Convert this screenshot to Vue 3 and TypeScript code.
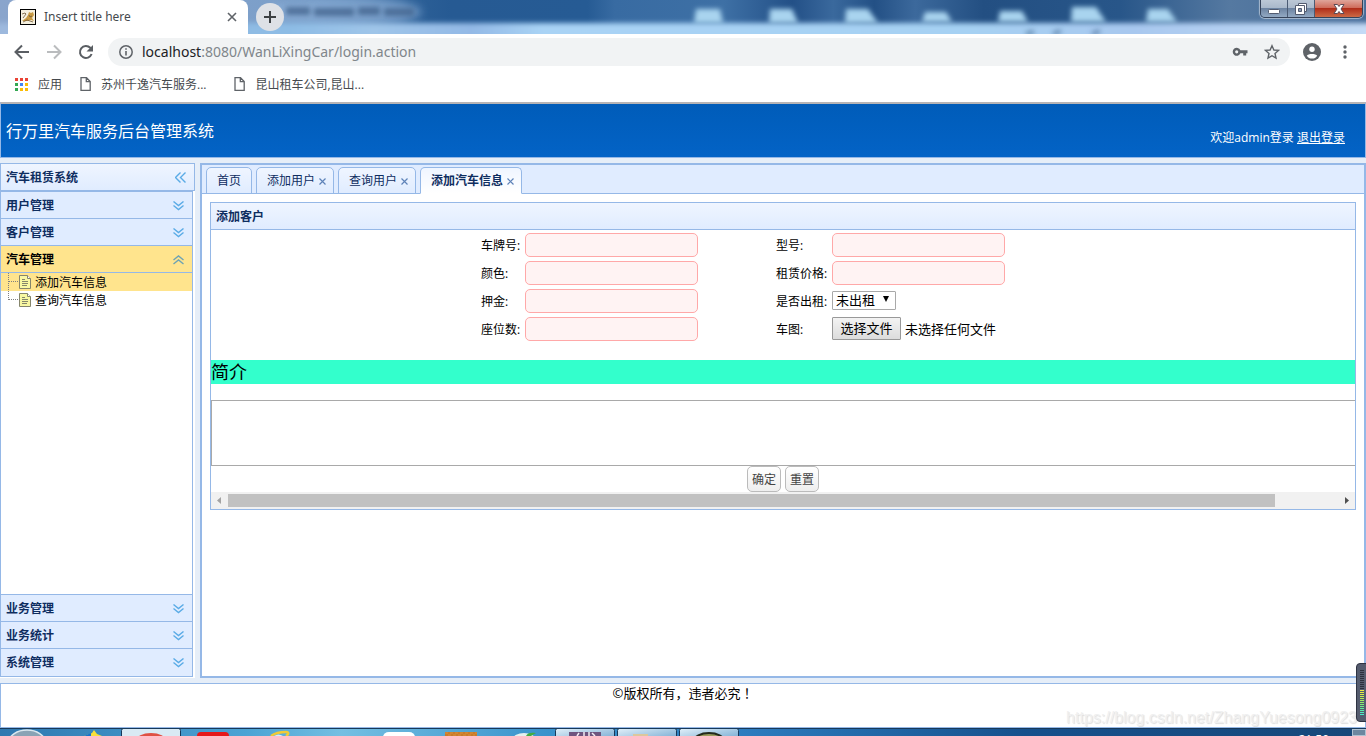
<script setup lang="ts">
import { ref } from 'vue'

interface Tab { title: string; closable: boolean }
interface Field { id: string; label: string; kind: 'text' | 'select' | 'file' }

const topMenus: string[] = ['用户管理', '客户管理']
const bottomMenus: string[] = ['业务管理', '业务统计', '系统管理']
const treeItems: string[] = ['添加汽车信息', '查询汽车信息']
const tabs: Tab[] = [
  { title: '首页', closable: false },
  { title: '添加用户', closable: true },
  { title: '查询用户', closable: true },
  { title: '添加汽车信息', closable: true },
]
const activeTab = ref(3)
const activeItem = ref(0)
const rows: Field[][] = [
  [{ id: 'plate', label: '车牌号:', kind: 'text' }, { id: 'model', label: '型号:', kind: 'text' }],
  [{ id: 'color', label: '颜色:', kind: 'text' }, { id: 'price', label: '租赁价格:', kind: 'text' }],
  [{ id: 'deposit', label: '押金:', kind: 'text' }, { id: 'rented', label: '是否出租:', kind: 'select' }],
  [{ id: 'seats', label: '座位数:', kind: 'text' }, { id: 'photo', label: '车图:', kind: 'file' }],
]
const appColors: string[] = ['#ea4335', '#ea4335', '#ea4335', '#34a853', '#4285f4', '#fbbc05', '#34a853', '#fbbc05', '#fbbc05']
const levels: string[] = ['#f2ee3e', '#e6ee42', '#d8ee48', '#c8ee4e', '#b6ee56', '#a4ee60', '#92ee6a', '#80ee78', '#70ee88', '#62ee98', '#58eeaa', '#50eebc', '#4aeccc']
</script>

<template>
  <div class="window">
    <header class="titlebar">
      <svg class="glass" viewBox="0 0 1366 34" preserveAspectRatio="none" aria-hidden="true">
        <defs>
          <filter id="soft" filterUnits="userSpaceOnUse" x="-40" y="-40" width="1446" height="120"><feGaussianBlur stdDeviation="5" /></filter>
          <filter id="softer" filterUnits="userSpaceOnUse" x="-40" y="-40" width="1446" height="120"><feGaussianBlur stdDeviation="2.500" /></filter>
          <linearGradient id="sky" x1="0" x2="1" y1="0" y2="0">
            <stop offset="0" stop-color="#8aa5cc" /><stop offset=".2" stop-color="#7c9fc9" />
            <stop offset=".3" stop-color="#2d6097" /><stop offset=".33" stop-color="#265a93" />
            <stop offset=".43" stop-color="#265b94" /><stop offset=".45" stop-color="#386ba2" />
            <stop offset=".53" stop-color="#3e70a5" /><stop offset=".58" stop-color="#235087" />
            <stop offset=".61" stop-color="#3a699d" /><stop offset=".64" stop-color="#235085" />
            <stop offset=".67" stop-color="#3c699c" /><stop offset=".72" stop-color="#234f82" />
            <stop offset=".82" stop-color="#285689" /><stop offset=".9" stop-color="#5579a1" />
            <stop offset="1" stop-color="#456b98" />
          </linearGradient>
          <linearGradient id="shelf" x1="0" x2="1" y1="0" y2="0">
            <stop offset="0" stop-color="#9eb8dd" /><stop offset=".22" stop-color="#8dbce5" />
            <stop offset=".28" stop-color="#9fc5e9" /><stop offset=".35" stop-color="#93b9e6" />
            <stop offset=".4" stop-color="#a9d3f5" /><stop offset=".7" stop-color="#a6d1f3" />
            <stop offset=".82" stop-color="#a8c8ef" /><stop offset="1" stop-color="#c6dcf6" />
          </linearGradient>
        </defs>
        <rect width="1366" height="34" fill="url(#sky)" />
        <ellipse cx="345" cy="12" rx="76" ry="15" fill="#91b4db" opacity=".7" filter="url(#soft)" />
        <path d="M286 11h24M314 12h40M358 11h22M384 12h30" stroke="#3a5c85" stroke-width="8" opacity=".7" filter="url(#softer)" />
        <rect x="-20" y="23" width="1406" height="20" fill="url(#shelf)" filter="url(#softer)" />
        <path d="M696 9h24l3 14h-29zM770 9h22l6 14h-29zM846 9h22l10 14h-33zM925 12h21l6 10h-30zM1000 11h22l6 11h-30zM1072 7h24l10 15h-35zM1148 9h20l9 13h-31z" fill="#a9d4ef" filter="url(#softer)" />
        <path d="M1026 34l8-2M1053 34l8-3M1092 34l8-3" stroke="#557ca2" stroke-width="5" opacity=".7" filter="url(#softer)" />
      </svg>
      <div class="browser-tab">
        <svg class="favicon" viewBox="0 0 16 16" aria-hidden="true">
          <rect x=".5" y=".5" width="15" height="15" fill="#f5f0df" stroke="#000" />
          <path d="M2 12l4-3 2-3 1-3 2 1 2-1 1 3-2 3 2 3-3-1-4 1z" fill="#c99b45" />
          <path d="M2 5l3-1 1 1-3 4M3 13l4-2 6 2M9 6l1 2 2-1" fill="none" stroke="#6c5636" stroke-width=".8" />
        </svg>
        <span class="browser-title">Insert title here</span>
        <button class="plain tab-x" type="button" aria-label="关闭标签页">
          <svg width="10" height="10" viewBox="0 0 10 10"><path d="M1 1l8 8M9 1L1 9" stroke="#5f6368" stroke-width="1.6" /></svg>
        </button>
      </div>
      <button class="plain new-tab" type="button" aria-label="新标签页">
        <svg width="12" height="12" viewBox="0 0 12 12"><path d="M6 0v12M0 6h12" stroke="#3c4043" stroke-width="2" /></svg>
      </button>
      <div class="caption-buttons">
        <button class="plain cap" type="button" aria-label="最小化">
          <svg width="14" height="16" viewBox="0 0 14 16"><rect x="1.5" y="8.5" width="11" height="4" rx="1" fill="#fff" stroke="#535c70" /></svg>
        </button>
        <button class="plain cap" type="button" aria-label="还原">
          <svg width="14" height="16" viewBox="0 0 14 16"><g fill="#fff" stroke="#535c70"><path d="M4.500 2.500h8v8h-8z" /><path d="M1.500 4.500h9v9h-9z" /><path d="M4.500 7.500h3v3h-3z" fill="#8b9bb4" /></g></svg>
        </button>
        <button class="plain cap cap-close" type="button" aria-label="关闭">
          <svg width="14" height="16" viewBox="0 0 14 16"><path d="M2 3.500h3.500L7 5.500l1.500-2H12L9 8l3 4.500H8.500L7 10.500l-1.500 2H2L5 8z" fill="#fff" stroke="#5c4a55" /></svg>
        </button>
      </div>
    </header>

    <nav class="toolbar">
      <button class="plain" type="button" aria-label="后退"><svg width="16" height="16" viewBox="0 0 16 16"><path d="M15 8H2M8 1.500L1.500 8 8 14.500" fill="none" stroke="#5a5e63" stroke-width="2" /></svg></button>
      <button class="plain" type="button" aria-label="前进"><svg width="16" height="16" viewBox="0 0 16 16"><path d="M1 8h13M8 1.500L14.500 8 8 14.500" fill="none" stroke="#babcbe" stroke-width="2" /></svg></button>
      <button class="plain" type="button" aria-label="刷新"><svg width="16" height="16" viewBox="0 0 16 16"><path d="M13.600 10A6 6 0 1 1 12.300 3.800L14 5.500" fill="none" stroke="#5a5e63" stroke-width="2" /><path d="M15 1v6.500H8.500z" fill="#5a5e63" /></svg></button>
      <div class="omnibox">
        <svg width="16" height="16" viewBox="0 0 16 16" aria-hidden="true"><circle cx="8" cy="8" r="6.200" fill="none" stroke="#5f6368" stroke-width="1.500" /><path d="M8 7v4.500M8 4.200v1.600" stroke="#5f6368" stroke-width="1.600" /></svg>
        <div class="url"><span class="host">localhost</span>:8080/WanLiXingCar/login.action</div>
        <button class="plain" type="button" aria-label="密码"><svg width="16" height="16" viewBox="0 0 16 16"><path fill-rule="evenodd" d="M8.400 6.300H15.500v3h-1.300v2.200h-3V9.300H8.400a4 4 0 1 1 0-3zM4.700 6.200a1.600 1.600 0 1 0 0 3.200 1.600 1.600 0 0 0 0-3.200z" fill="#5f6368" /></svg></button>
        <button class="plain" type="button" aria-label="收藏"><svg width="16" height="16" viewBox="0 0 16 16"><path d="M8 1.700l1.900 4.300 4.600.4-3.500 3.100 1 4.600L8 11.700l-4 2.400 1-4.600L1.500 6.400l4.600-.4z" fill="none" stroke="#5f6368" stroke-width="1.400" /></svg></button>
      </div>
      <button class="plain" type="button" aria-label="用户"><svg width="18" height="18" viewBox="0 0 18 18"><circle cx="9" cy="9" r="9" fill="#5f6368" /><circle cx="9" cy="6.200" r="2.700" fill="#fff" /><path d="M3.800 12.700c1.200-2.300 9.200-2.300 10.400 0-1.200 1.900-3 2.900-5.200 2.900s-4-1-5.200-2.900z" fill="#fff" /></svg></button>
      <button class="plain menu" type="button" aria-label="菜单"><svg width="4" height="14" viewBox="0 0 4 14"><g fill="#5f6368"><circle cx="2" cy="2" r="1.700" /><circle cx="2" cy="7" r="1.700" /><circle cx="2" cy="12" r="1.700" /></g></svg></button>
    </nav>

    <nav class="bookmarks">
      <a class="bookmark apps" href="#">
        <svg width="13" height="13" viewBox="0 0 13 13" aria-hidden="true"><rect v-for="(c, i) in appColors" :key="i" :x="(i % 3) * 5" :y="Math.floor(i / 3) * 5" width="3" height="3" :fill="c" /></svg>
        <span>应用</span>
      </a>
      <a v-for="b in ['苏州千逸汽车服务...', '昆山租车公司,昆山...']" :key="b" class="bookmark" href="#">
        <svg width="11" height="14" viewBox="0 0 11 14" aria-hidden="true"><path d="M1 .7h5.500L10.200 4.500V13.300H1zM6.300.7v4h3.900" fill="none" stroke="#5f6368" stroke-width="1.300" /></svg>
        <span>{{ b }}</span>
      </a>
    </nav>

    <header class="banner">
      <h1>行万里汽车服务后台管理系统</h1>
      <p>欢迎admin登录 <a href="#">退出登录</a></p>
    </header>

    <div class="workspace">
      <aside class="sidebar">
        <div class="side-title">
          <h2>汽车租赁系统</h2>
          <button class="plain" type="button" aria-label="折叠"><svg width="11" height="11" viewBox="0 0 11 11"><path d="M5.500.5l-5 5 5 5M10.500.5l-5 5 5 5" fill="none" stroke="#5aabe6" stroke-width="1.400" /></svg></button>
        </div>
        <div class="accordion">
          <button v-for="m in topMenus" :key="m" class="fold" type="button">
            {{ m }}<svg width="11" height="10" viewBox="0 0 11 10"><path d="M.5.500l5 4 5-4M.5 4.500l5 4 5-4" fill="none" stroke="#5aabe6" stroke-width="1.400" /></svg>
          </button>
          <button class="fold open" type="button">
            汽车管理<svg width="11" height="10" viewBox="0 0 11 10"><path d="M.5 5l5-4 5 4M.5 9l5-4 5 4" fill="none" stroke="#6ea3b4" stroke-width="1.400" /></svg>
          </button>
          <ul class="tree">
            <li v-for="(t, i) in treeItems" :key="t" :class="{ selected: i === activeItem }">
              <a href="#" @click.prevent="activeItem = i">
                <svg width="26" height="18" viewBox="0 0 26 18" aria-hidden="true">
                  <path :d="i === treeItems.length - 1 ? 'M2.500 0v9' : 'M2.500 0v18'" stroke="#808080" stroke-dasharray="1 1" />
                  <path d="M3 8.500h9" stroke="#808080" stroke-dasharray="1 1" />
                  <path d="M13.500 2.500h8l3 3v10h-11z" fill="#f8f7a2" stroke="#85856c" />
                  <path d="M21.500 2.500v3h3" fill="#fff" stroke="#85856c" />
                  <path d="M16 6.500h3M16 8.500h6M16 10.500h6M16 12.500h5" stroke="#85866a" />
                </svg>
                <span>{{ t }}</span>
              </a>
            </li>
          </ul>
          <button v-for="m in bottomMenus" :key="m" class="fold lower" type="button">
            {{ m }}<svg width="11" height="10" viewBox="0 0 11 10"><path d="M.5.500l5 4 5-4M.5 4.500l5 4 5-4" fill="none" stroke="#5aabe6" stroke-width="1.400" /></svg>
          </button>
        </div>
      </aside>

      <main class="center">
        <div class="tabs">
          <div v-for="(t, i) in tabs" :key="t.title" class="tab" :class="{ active: i === activeTab }">
            <button class="plain tab-label" type="button" @click="activeTab = i">{{ t.title }}</button>
            <button v-if="t.closable" class="plain tab-close" type="button" aria-label="关闭"><svg width="7" height="7" viewBox="0 0 7 7"><path d="M.5.500l6 6M6.500.500l-6 6" stroke="#5d82b8" stroke-width="1.200" /></svg></button>
          </div>
        </div>
        <section class="panel">
          <h2 class="panel-title">添加客户</h2>
          <form class="form" @submit.prevent>
            <table class="fields">
              <tbody>
                <tr v-for="(row, r) in rows" :key="r">
                  <template v-for="(f, c) in row" :key="f.id">
                    <td :class="c === 0 ? 'label-a' : 'label-b'"><label :for="f.id">{{ f.label }}</label></td>
                    <td :class="{ first: c === 0 }">
                      <input v-if="f.kind === 'text'" :id="f.id" class="text" type="text" />
                      <span v-else-if="f.kind === 'select'" class="select-wrap">
                        <select :id="f.id"><option>未出租</option><option>已出租</option></select>
                        <svg width="6" height="6" viewBox="0 0 6 6" aria-hidden="true"><path d="M0 0h6L3 6z" fill="#000" /></svg>
                      </span>
                      <span v-else class="file-wrap">
                        <span class="file-button">选择文件</span><span>未选择任何文件</span>
                        <input :id="f.id" type="file" />
                      </span>
                    </td>
                  </template>
                </tr>
              </tbody>
            </table>
            <label class="intro" for="intro">简介</label>
            <textarea id="intro"></textarea>
            <div class="actions">
              <button type="submit">确定</button>
              <button type="reset">重置</button>
            </div>
          </form>
          <div class="scrollbar" aria-hidden="true">
            <svg width="17" height="17" viewBox="0 0 17 17"><path d="M10 5v7L6 8.500z" fill="#a3a3a3" /></svg>
            <div class="track"><div class="thumb"></div></div>
            <svg width="17" height="17" viewBox="0 0 17 17"><path d="M7 5v7l4-3.500z" fill="#505050" /></svg>
          </div>
        </section>
      </main>
    </div>

    <footer class="copyright">©版权所有，违者必究<span class="mark">！</span></footer>

    <div class="taskbar">
      <svg viewBox="0 0 740 8" width="740" height="8" aria-hidden="true">
        <defs>
          <linearGradient id="task" x1="0" x2="1" y1="0" y2="1"><stop offset="0" stop-color="#e2f0f9" /><stop offset=".5" stop-color="#a9cbe4" /><stop offset="1" stop-color="#6fa6d0" /></linearGradient>
        </defs>
        <ellipse cx="27" cy="14" rx="18" ry="12" fill="#8aa3b5" stroke="#dce8ef" stroke-width="1.500" />
        <path d="M84 8l8-3 2-3 3 4 5 2z" fill="#f7e03a" /><path d="M84 8l7-3v3z" fill="#1473d0" />
        <rect x="121.500" y=".5" width="59" height="12" rx="2" fill="#d9eaf4" stroke="#17395a" />
        <ellipse cx="151" cy="13" rx="15" ry="8" fill="#df5144" />
        <rect x="197" y="4" width="32" height="10" rx="4" fill="#e5191b" />
        <path d="M271 8c4-3 9-4 15-4 3 0 3 2 0 4" fill="none" stroke="#f1cb36" stroke-width="2.500" /><path d="M274 8c3-2 6-2 9 0z" fill="#d8edf8" />
        <rect x="383" y="4" width="32" height="10" rx="6" fill="#fff" />
        <rect x="445" y="4" width="32" height="4" fill="#c97b2c" /><path d="M445 5h32M448 7h27" stroke="#e8a54b" stroke-dasharray="3 2" opacity=".5" />
        <ellipse cx="524" cy="11" rx="11" ry="6" fill="#e4f1ef" /><path d="M526 8c1-3 5-4 10-3l-5 3z" fill="#42ad42" />
        <g fill="url(#task)" stroke="#17395a"><rect x="555.500" y=".5" width="59" height="12" rx="2" /><rect x="617.500" y=".5" width="59" height="12" rx="2" /><rect x="679.500" y=".5" width="59" height="12" rx="2" /></g>
        <rect x="569" y="4" width="32" height="5" fill="#6f557f" /><path d="M577 8l2-3M584 8V4M589 8V4M595 8l-3-3" stroke="#f2edf4" stroke-width="1.500" />
        <rect x="633" y="6" width="15" height="2" fill="#dcc79c" />
        <ellipse cx="709" cy="13" rx="15" ry="8" fill="#9b9c5d" stroke="#242b1c" stroke-width="2" />
      </svg>
      <span class="clock">21:50</span>
      <span class="show-desktop"></span>
    </div>

    <div class="watermark">https://blog.csdn.net/ZhangYuesong0923</div>
    <svg class="meter" width="10" height="59" viewBox="0 0 10 59" aria-hidden="true">
      <path d="M11 .5H4A3.500 3.500 0 0 0 .5 4v51A3.500 3.500 0 0 0 4 58.500h7" fill="#555c6e" stroke="#2e3342" />
      <path d="M4 7.500h4M4 9.500h4M4 11.500h4M4 13.500h4M4 15.500h4M4 17.500h4M4 19.500h4M4 21.500h4M4 23.500h4M4 25.500h4" stroke="#2c303c" />
      <rect v-for="(c, i) in levels" :key="c" x="4" :y="27 + i * 2" width="4" height="1" :fill="c" />
    </svg>
  </div>
</template>

<style>
html, body, #app { height: 100%; }
body { margin: 0; overflow: hidden; }
</style>

<style scoped>
* { box-sizing: border-box; }
.window { position: relative; display: flex; flex-direction: column; height: 100vh; background: #fff; font: 12px/18px "Open Sans", "Noto Sans CJK SC", sans-serif; color: #000; overflow: hidden; }
h1, h2, p, ul { margin: 0; padding: 0; }
button, input, select, textarea { font: inherit; color: inherit; margin: 0; }
.plain { display: flex; align-items: center; justify-content: center; padding: 0; border: 0; background: none; flex: none; }
svg { display: block; flex: none; }

.titlebar { position: relative; flex: none; display: flex; height: 34px; background: #3b6ba0; }
.glass { position: absolute; inset: 0; width: 100%; height: 100%; }
.browser-tab { position: relative; display: flex; align-items: center; gap: 8px; width: 240px; margin-left: 8px; padding: 0 11px 0 12px; background: #fff; border-radius: 8px 8px 0 0; }
.favicon { width: 16px; height: 16px; }
.browser-title { flex: 1; font: 12px/18px "Noto Sans", sans-serif; color: #45494d; }
.new-tab { position: relative; width: 28px; height: 28px; margin: 3px 0 0 8px; border-radius: 50%; background: #dee1e6; }
.caption-buttons { position: relative; display: flex; height: 18px; margin-left: auto; margin-right: 3px; border: 1px solid #35435a; border-top: 0; border-radius: 0 0 5px 5px; overflow: hidden; box-shadow: 0 0 1px 1px rgba(255, 255, 255, .5); }
.cap { width: 27px; border-right: 1px solid #4b5b74; background: linear-gradient(#bcc8d6, #aab9cb 45%, #6d84a2 50%, #93a9c3); }
.cap-close { width: 47px; border-right: 0; background: linear-gradient(#dfa59a, #cf6d5c 45%, #b02e1a 50%, #cc6a45); }

.toolbar { flex: none; display: flex; align-items: center; gap: 16px; height: 36px; padding: 0 13px 0 14px; }
.omnibox { flex: 1; display: flex; align-items: center; gap: 16px; height: 28px; margin: 0 -3px 0 -2px; padding: 0 10px; border-radius: 14px; background: #f1f3f4; }
.url { flex: 1; margin-left: -8px; font: 14px/20px "Noto Sans", sans-serif; color: #80868b; }
.host { color: #202124; }
.menu { width: 16px; }
.bookmarks { flex: none; display: flex; align-items: center; gap: 28px; height: 32px; padding: 0 15px 4px; }
.bookmark { display: flex; align-items: center; gap: 10px; color: #45494d; text-decoration: none; }
.bookmark span { padding-top: 2px; }
.apps { margin-right: -10px; }

.banner { flex: none; display: flex; justify-content: space-between; align-items: center; height: 56px; padding: 0 20px 0 5px; border: 1px solid #95b8e7; border-top: 2px solid #b6b4b6; background: linear-gradient(#005cb9, #0363c6); color: #fff; }
.banner h1 { font-size: 16px; line-height: 24px; font-weight: 400; }
.banner p { padding-top: 14px; }
.banner a { color: #fff; }

.workspace { flex: 1; min-height: 0; display: flex; gap: 5px; padding: 5px 0; background: #e6eef8; }
.sidebar { flex: none; display: flex; flex-direction: column; width: 195px; background: #fff; }
.side-title { flex: none; display: flex; align-items: center; justify-content: space-between; height: 28px; padding: 0 8px 0 5px; border: 1px solid #95b8e7; background: linear-gradient(#eff5ff, #e0ecff); }
.side-title h2 { padding-top: 2px; }
.side-title h2, .panel-title { font-size: 12px; line-height: 18px; font-weight: 700; color: #0e2d5f; }
.accordion { flex: 1; display: flex; flex-direction: column; width: 193px; margin-bottom: 1px; padding-bottom: 1px; border: 1px solid #95b8e7; background: #e0ecff; }
.fold { flex: none; display: flex; align-items: center; justify-content: space-between; height: 27px; padding: 2px 8px 0 5px; border: 0; border-bottom: 1px solid #95b8e7; background: #e0ecff; font-weight: 700; color: #0e2d5f; }
.fold.open { background: #ffe48d; color: #000; }
.fold.lower { border-bottom: 0; border-top: 1px solid #95b8e7; }
.tree { flex: 1; list-style: none; background: #fff; }
.tree a { display: flex; gap: 3px; height: 18px; padding-left: 5px; line-height: 20px; color: #000; text-decoration: none; }
.tree .selected { background: #ffe48d; }

.center { flex: 1; min-width: 0; border: 2px solid #95b8e7; background: #fff; }
.tabs { display: flex; align-items: flex-end; gap: 4px; height: 29px; padding-left: 4px; border-bottom: 1px solid #95b8e7; background: #e0ecff; }
.tab { display: flex; align-items: center; height: 27px; margin-bottom: -1px; padding: 0 10px; border: 1px solid #95b8e7; border-radius: 5px 5px 0 0; background: linear-gradient(#eff5ff, #e0ecff); color: #0e2d5f; }
.tab.active { border-bottom-color: #fff; background: linear-gradient(#eff5ff, #fff); font-weight: 700; }
.tab-close { margin: 2px -3px 0 4px; }
.panel { margin: 8px; border: 1px solid #95b8e7; }
.panel-title { height: 27px; padding: 5px 5px 0; border-bottom: 1px solid #95b8e7; background: linear-gradient(#eff5ff, #e0ecff); }
.form { overflow: hidden; }
.fields { margin: 1px 0 17px 23.6%; border-collapse: collapse; }
.fields td { height: 28px; padding: 0; }
.fields label { display: block; padding-top: 2px; }
.label-a { width: 44px; }
.label-b { width: 56px; }
.first { width: 251px; }
.text { display: block; width: 173px; height: 24px; padding: 0 4px; border: 1px solid #ffa8a8; border-radius: 5px; background: #fff3f3; }
.select-wrap { position: relative; display: block; width: 64px; margin-bottom: 1px; }
.select-wrap svg { position: absolute; right: 7px; top: 5px; pointer-events: none; }
select { display: block; appearance: none; width: 100%; height: 19px; padding: 0 0 0 3px; border: 1px solid #a9a9a9; border-radius: 1px; background: #fff; font-size: 13px; line-height: 17px; }
.file-wrap { position: relative; display: flex; align-items: center; gap: 4px; width: max-content; margin-bottom: 1px; font-size: 13px; }
.file-button { width: 69px; height: 23px; border: 1px solid #999; border-radius: 1px; background: linear-gradient(#f3f3f3, #dcdcdc); line-height: 21px; text-align: center; }
.file-wrap input { position: absolute; inset: 0; width: 100%; opacity: 0; }
.intro { display: block; background: #3fc; font-size: 18px; line-height: 24px; }
textarea { display: block; width: 102%; height: 66px; margin-top: 16px; border: 1px solid #a9a9a9; background: #fff; resize: none; }
.actions { display: flex; justify-content: center; gap: 4px; }
.actions button { width: 34px; height: 26px; padding: 2px 0 0; border: 1px solid #bbb; border-radius: 5px; background: linear-gradient(#fff, #eee); color: #444; }
.scrollbar { display: flex; height: 17px; background: #f1f1f1; }
.track { flex: 1; padding: 2px 0; }
.thumb { width: 94.3%; height: 13px; background: #c1c1c1; }

.copyright { flex: none; height: 45px; border: 1px solid #95b8e7; text-align: center; font-size: 13px; line-height: 18px; }
.mark { font-family: "Noto Sans CJK JP", sans-serif; line-height: 16px; }
.taskbar { position: relative; flex: none; display: flex; height: 8px; overflow: hidden; border-top: 1px solid #17395a; background: linear-gradient(90deg, #2f78b0, #4ba3d4 18%, #74bfe2 25%, #3993cc 40%, #2d7dc0 54%, #16508c 75%, #174779); }
.taskbar svg { margin-top: -1px; }
.clock { margin: 3px 23px 0 auto; color: #fff; font-size: 12px; line-height: 16px; }
.show-desktop { width: 14px; border: 1px solid #b0c2d2; background: #6d87a0; }
.watermark { position: absolute; right: 9px; bottom: 8px; font: 16px/20px "Liberation Sans", sans-serif; color: #f0f0f0; text-shadow: 1px 1px 1px #ddd; }
.meter { position: absolute; right: 0; bottom: 14px; }
</style>
